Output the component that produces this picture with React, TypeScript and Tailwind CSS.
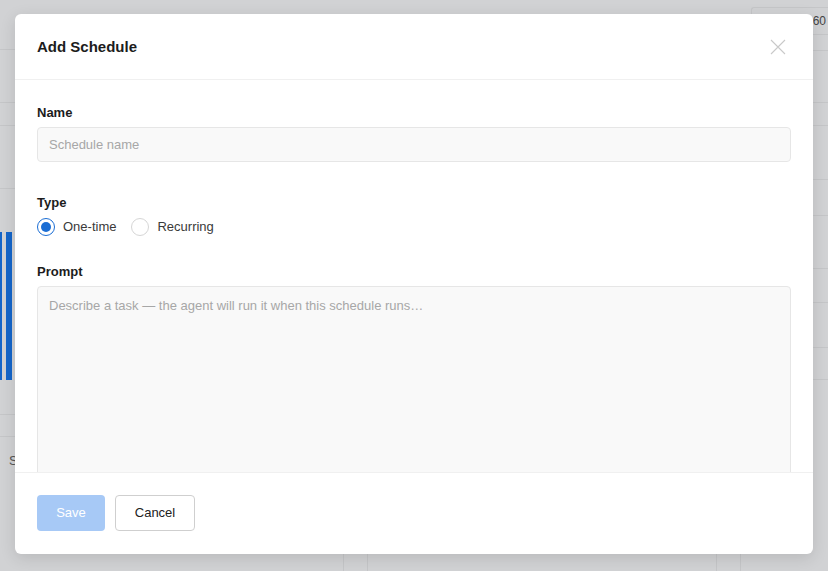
import React, { useState } from 'react';

// faux page behind the dimmed overlay
const Backdrop: React.FC = () => (
  <div className="flex h-full w-full flex-col bg-[#d1d2d4]">
    <div className="flex min-h-0 flex-1">
      <div className="flex w-[15px] flex-col">
        <div className="h-[50px] border-b border-[#c5c6c8]" />
        <div className="h-[53px] border-b border-[#c5c6c8]" />
        <div className="h-[23px] border-b border-[#c5c6c8]" />
        <div className="h-[63px] border-b border-[#c5c6c8]" />
        <div className="flex h-[148px] gap-[4px] pt-[43px]">
          <div className="h-[148px] w-[2px] bg-[#1465c9]" />
          <div className="h-[148px] w-[6px] bg-[#1465c9]" />
        </div>
        <div className="mt-[43px] h-[35px] border-b border-[#c5c6c8]" />
        <div className="h-[22px] border-b border-[#c5c6c8]" />
        <div className="pl-[9px] pt-[14px] text-[13px] text-[#555]">S</div>
      </div>
      <div className="flex-1" />
      <div className="flex w-[88px] flex-col">
        <div className="ml-[11px] mt-[7px] flex h-[28px] items-center justify-end rounded-tl-[3px] border border-r-0 border-[#c5c6c8] pr-[2px] text-[12px] text-[#444]">
          60
        </div>
        <div className="h-[16px] border-b border-[#c5c6c8]" />
        <div className="h-[52px] border-b border-[#c5c6c8]" />
        <div className="h-[23px] border-b border-[#c5c6c8]" />
        <div className="h-[54px] border-b border-[#c5c6c8]" />
        <div className="h-[36px] border-b border-[#c5c6c8]" />
        <div className="h-[53px] border-b border-[#c5c6c8]" />
        <div className="h-[34px] border-b border-[#c5c6c8]" />
        <div className="h-[45px] border-b border-[#c5c6c8]" />
        <div className="h-[32px] border-b border-[#c5c6c8]" />
      </div>
    </div>
    <div className="flex h-[17px] shrink-0">
      <div className="w-[344px] border-r border-[#c5c6c8]" />
      <div className="w-[23px]" />
      <div className="w-[350px] border-x border-[#c5c6c8]" />
      <div className="w-[23px]" />
      <div className="flex-1 border-l border-[#c5c6c8]" />
    </div>
  </div>
);

const Radio: React.FC<{ checked: boolean; label: string; onClick: () => void }> = ({ checked, label, onClick }) => (
  <label className="flex cursor-pointer items-center gap-[8px]" onClick={onClick}>
    <span
      className={`flex h-[18px] w-[18px] items-center justify-center rounded-full border bg-white ${
        checked ? 'border-[1.5px] border-[#1a6dd4]' : 'border-[#d6d6d6]'
      }`}
    >
      {checked && <span className="h-[10px] w-[10px] rounded-full bg-[#1a6dd4]" />}
    </span>
    <span className="text-[13px] text-[#3a3a3a]">{label}</span>
  </label>
);

export default function App() {
  const [type, setType] = useState<'once' | 'recurring'>('once');

  return (
    <div className="relative h-[571px] w-[828px] overflow-hidden [font-family:'Liberation_Sans',Arial,sans-serif]">
      <Backdrop />

      <div className="absolute inset-0 flex items-start justify-start pl-[15px] pt-[14px]">
        <div className="flex h-[540px] w-[798px] flex-col overflow-hidden rounded-[6px] bg-white shadow-[0_4px_16px_rgba(0,0,0,0.12)]">
          {/* header */}
          <div className="flex h-[66px] shrink-0 items-center justify-between border-b border-[#f0f0f0] pl-[22px] pr-[27px]">
            <h2 className="pt-[1px] text-[15px] font-bold text-[#1c1c1c]">Add Schedule</h2>
            <button className="flex h-[16px] w-[16px] items-center justify-center">
              <svg width="16" height="16" viewBox="0 0 16 16" fill="none">
                <path d="M1 1L15 15M15 1L1 15" stroke="#c9c9c9" strokeWidth="1.1" />
              </svg>
            </button>
          </div>

          {/* body */}
          <div className="flex min-h-0 flex-1 flex-col overflow-hidden px-[22px] pt-[25px]">
            <div className="flex flex-col">
              <span className="text-[13px] font-bold leading-[16px] text-[#1c1c1c]">Name</span>
              <input
                className="mt-[6px] h-[35px] w-full rounded-[4px] border border-[#e6e6e6] bg-[#f9f9f9] px-[11px] text-[13px] text-[#333] outline-none placeholder:text-[#a7a7a7]"
                placeholder="Schedule name"
              />
            </div>

            <div className="mt-[33px] flex flex-col">
              <span className="text-[13px] font-bold leading-[16px] text-[#1c1c1c]">Type</span>
              <div className="mt-[6px] flex items-center gap-[15px]">
                <Radio checked={type === 'once'} label="One-time" onClick={() => setType('once')} />
                <Radio checked={type === 'recurring'} label="Recurring" onClick={() => setType('recurring')} />
              </div>
            </div>

            <div className="mt-[27px] flex flex-col">
              <span className="text-[13px] font-bold leading-[16px] text-[#1c1c1c]">Prompt</span>
              <textarea
                className="mt-[6px] h-[240px] w-full shrink-0 resize-none rounded-[4px] border border-[#e6e6e6] bg-[#f9f9f9] px-[11px] py-[10px] text-[13px] leading-[18px] text-[#333] outline-none placeholder:text-[#a7a7a7]"
                placeholder="Describe a task — the agent will run it when this schedule runs…"
              />
            </div>
          </div>

          {/* footer */}
          <div className="flex h-[82px] shrink-0 items-center gap-[10px] border-t border-[#f0f0f0] px-[22px] pb-[1px]">
            <button
              disabled
              className="h-[36px] w-[68px] rounded-[4px] bg-[#a7c9f6] text-[13px] text-white"
            >
              Save
            </button>
            <button className="h-[36px] w-[80px] rounded-[4px] border border-[#cfcfcf] bg-white text-[13px] text-[#222]">
              Cancel
            </button>
          </div>
        </div>
      </div>
    </div>
  );
}
